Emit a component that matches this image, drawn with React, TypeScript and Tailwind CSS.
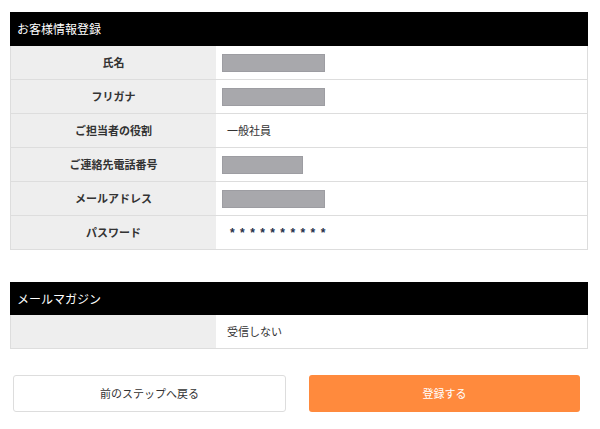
const rows: { label: string; value?: string; bar?: number; stars?: boolean }[] = [
  { label: "氏名", bar: 103 },
  { label: "フリガナ", bar: 103 },
  { label: "ご担当者の役割", value: "一般社員" },
  { label: "ご連絡先電話番号", bar: 81 },
  { label: "メールアドレス", bar: 103 },
  { label: "パスワード", stars: true },
];

function Row({ label, children }: { label: string; children: React.ReactNode }) {
  return (
    <div className="grid grid-cols-[205px_1fr] h-[34px] border-x border-b border-[#dddddd]">
      <div className="bg-[#eeeeee] flex items-center justify-center font-bold text-[11px] text-[#333333]">
        {label}
      </div>
      <div className="flex items-center pl-[6px] text-[11px] text-[#333333]">{children}</div>
    </div>
  );
}

export default function App() {
  return (
    <div
      className="w-[600px] h-[429px] bg-white pl-[10px] pr-[12px] pt-[12px]"
      style={{ fontFamily: '"Noto Sans CJK JP", "Noto Sans", sans-serif' }}
    >
      {/* 顧客情報 */}
      <div className="h-[34px] bg-black text-white text-[12px] flex items-center pl-[7px]">
        お客様情報登録
      </div>
      {rows.map((r) => (
        <Row key={r.label} label={r.label}>
          {r.bar && (
            <span
              className="block h-[18px] bg-[#a8a8ac] border border-[#9d9da2]"
              style={{ width: r.bar }}
            />
          )}
          {r.value && <span className="pl-[5px]">{r.value}</span>}
          {r.stars && (
            <span
              className="pl-[8px] text-[12px] font-bold tracking-[5.4px] text-[#26304a]"
              style={{ fontFamily: '"Liberation Sans", sans-serif' }}
            >
              **********
            </span>
          )}
        </Row>
      ))}

      {/* メルマガ */}
      <div className="mt-[32px] h-[33px] bg-black text-white text-[12px] flex items-center pl-[7px]">
        メールマガジン
      </div>
      <Row label="">
        <span className="pl-[5px]">受信しない</span>
      </Row>

      <div className="flex gap-[23px] ml-[3px] mr-[8px] mt-[26px]">
        <button className="flex-1 h-[37px] rounded-[3px] border border-[#dddddd] bg-white text-[11px] text-[#333333]">
          前のステップへ戻る
        </button>
        <button className="flex-1 h-[37px] rounded-[3px] bg-[#ff8a3d] text-[11px] text-white">
          登録する
        </button>
      </div>
    </div>
  );
}
